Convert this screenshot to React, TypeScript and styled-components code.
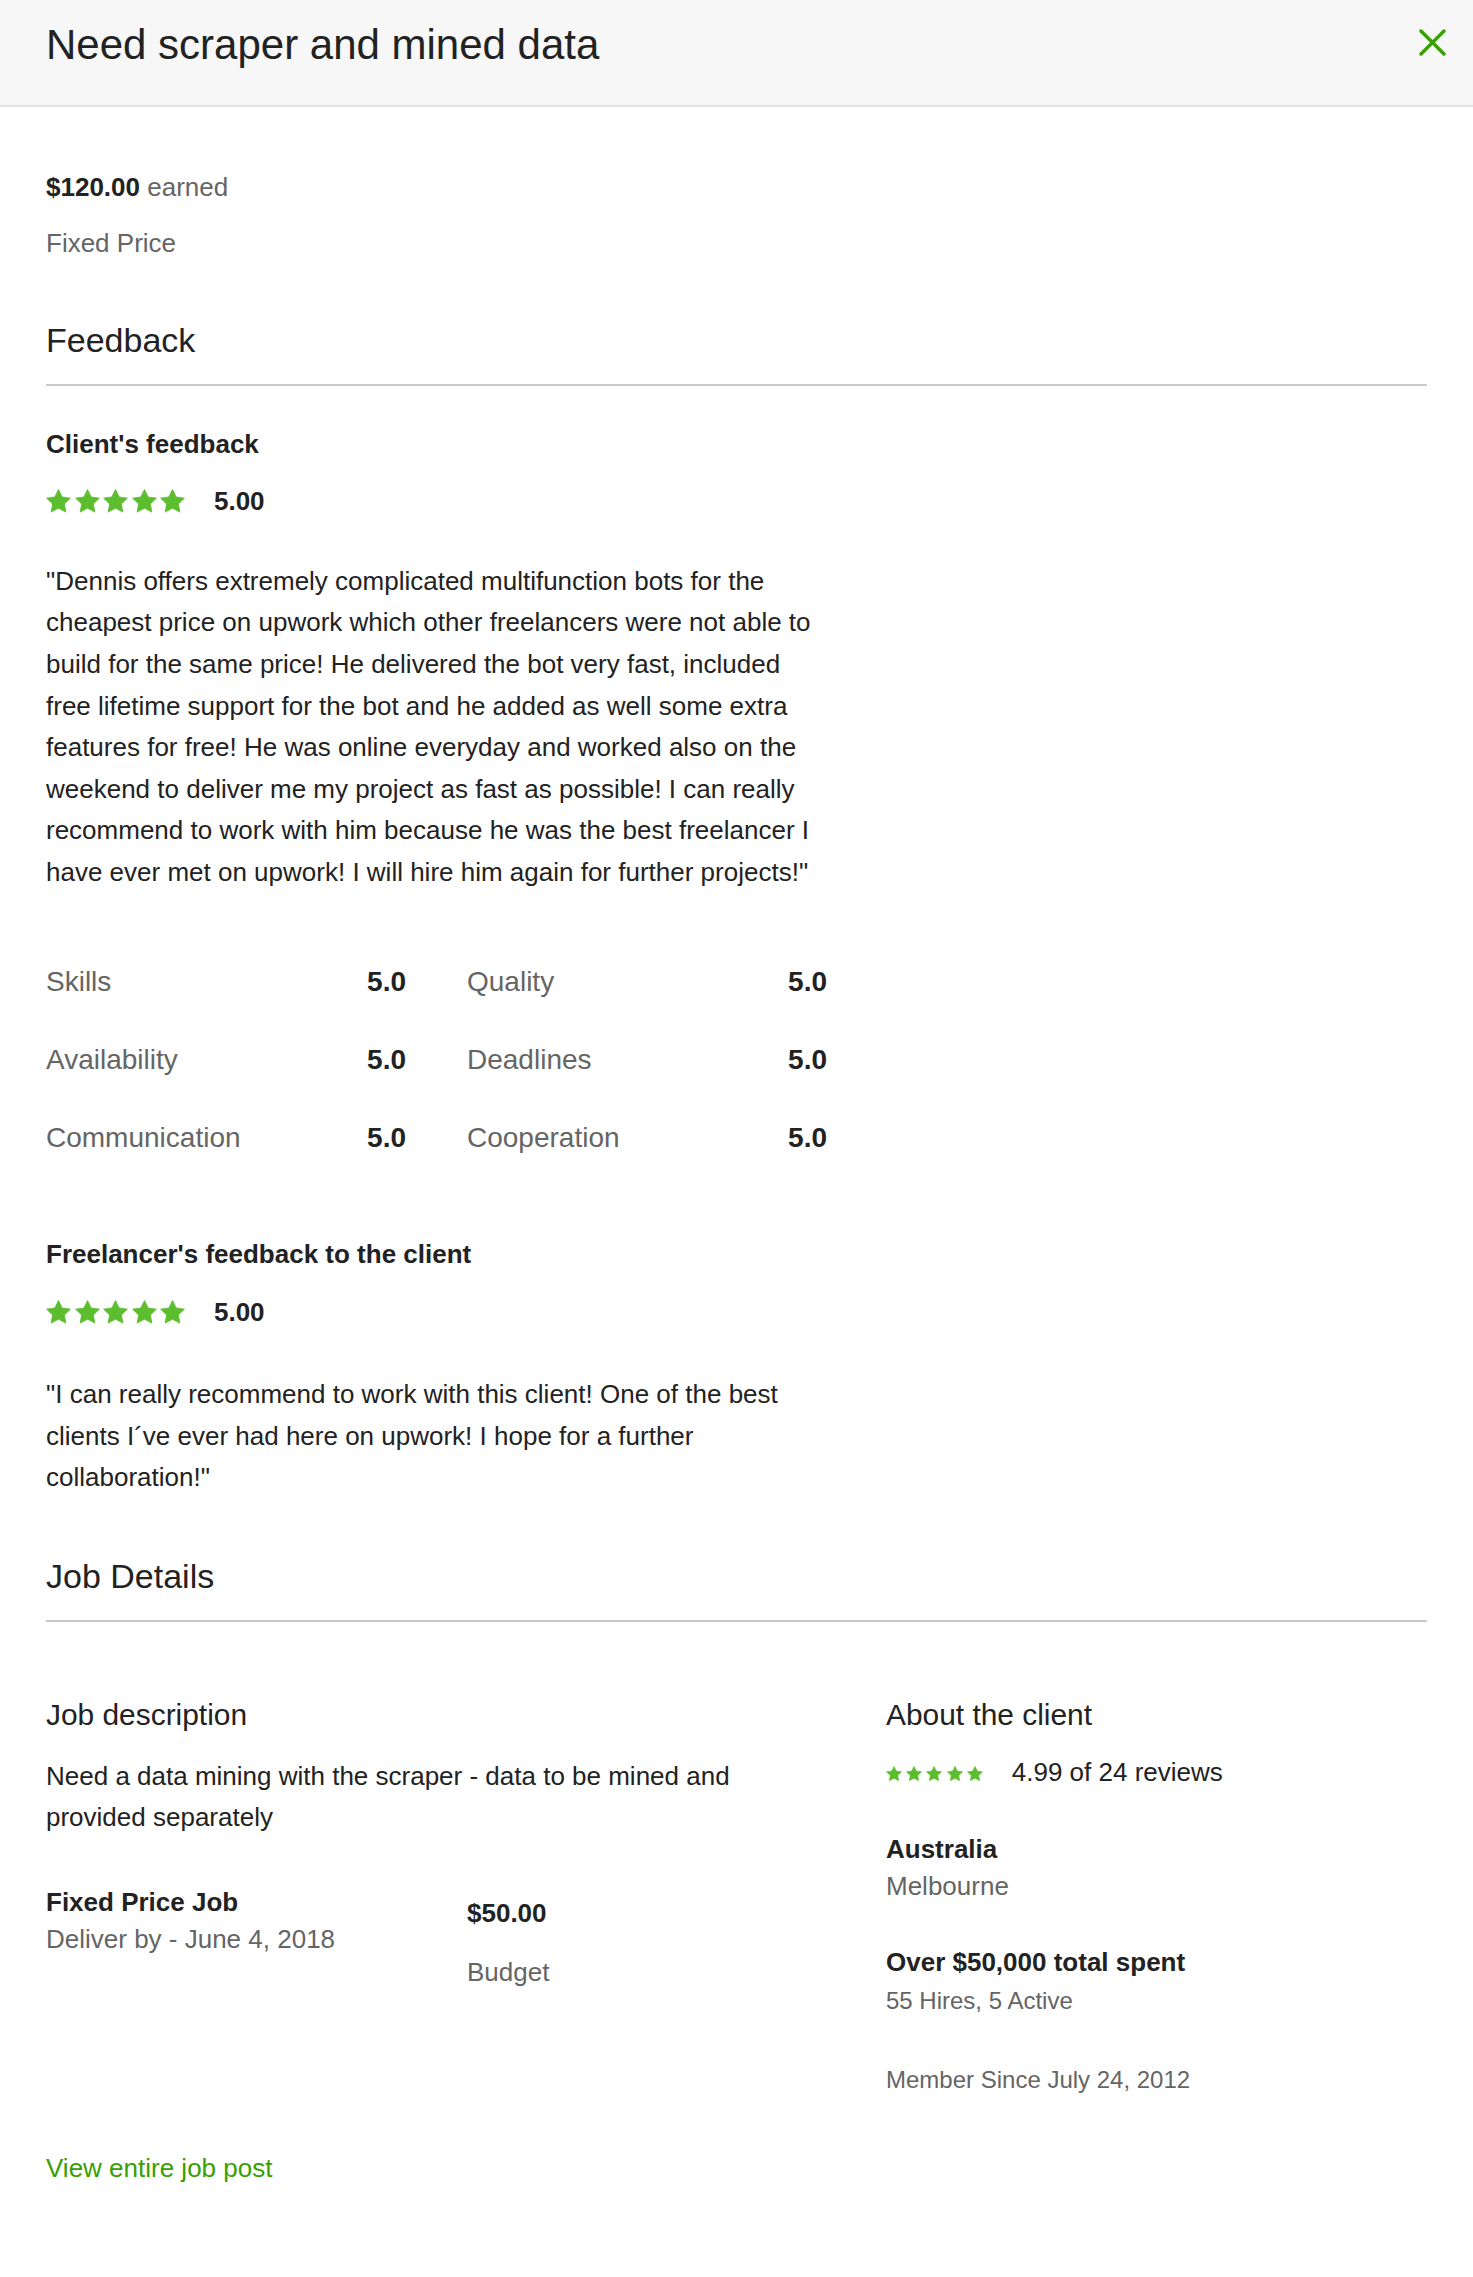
import React from "react";
import styled, { createGlobalStyle } from "styled-components";

const GlobalStyle = createGlobalStyle`
  html, body {
    margin: 0;
    padding: 0;
    background: #ffffff;
  }
  body {
    font-family: "Liberation Sans", Arial, Helvetica, sans-serif;
    color: #222222;
    -webkit-font-smoothing: antialiased;
  }
  * { box-sizing: border-box; }
`;

const Page = styled.div`
  width: 100%;
  min-height: 2277px;
  background: #ffffff;
`;

const Header = styled.header`
  display: flex;
  justify-content: space-between;
  align-items: flex-start;
  height: 107px;
  padding: 20px 27px 0 46px;
  background: #f7f7f7;
  border-bottom: 2px solid #e2e2e2;
`;

const Title = styled.h1`
  margin: 0;
  font-size: 42px;
  line-height: 50px;
  font-weight: 400;
  color: #222222;
`;

const CloseButton = styled.button`
  margin-top: 9px;
  width: 27px;
  height: 27px;
  padding: 0;
  border: 0;
  background: transparent;
  cursor: pointer;
  display: flex;
`;

const Body = styled.main`
  padding: 62px 46px 90px 46px;
`;

const Line = styled.div<{ $muted?: boolean; $mt?: number; $size?: number }>`
  margin: ${(p) => p.$mt ?? 0}px 0 0 0;
  font-size: ${(p) => p.$size ?? 26}px;
  line-height: 36.6px;
  color: ${(p) => (p.$muted ? "#656565" : "#222222")};
`;

const Strong = styled.strong`
  font-weight: 700;
  color: #222222;
`;

const Muted = styled.span`
  color: #656565;
`;

const SectionHeading = styled.h2<{ $mt: number }>`
  margin: ${(p) => p.$mt}px 0 0 0;
  padding-bottom: 24px;
  font-size: 34px;
  line-height: 40px;
  font-weight: 400;
  color: #222222;
  border-bottom: 2px solid #c9c9c9;
`;

const SubHeading = styled.h3<{ $mt: number }>`
  margin: ${(p) => p.$mt}px 0 0 0;
  font-size: 26px;
  line-height: 36.6px;
  font-weight: 700;
  color: #222222;
`;

const ScoreRow = styled.div<{ $mt: number; $gap: number }>`
  display: flex;
  align-items: center;
  gap: ${(p) => p.$gap}px;
  margin-top: ${(p) => p.$mt}px;
`;

const ScoreValue = styled.span<{ $bold?: boolean }>`
  font-size: 26px;
  line-height: 36.6px;
  font-weight: ${(p) => (p.$bold ? 700 : 400)};
  color: #222222;
`;

const StarStrip = styled.span<{ $gap: number; $offset?: number }>`
  display: inline-flex;
  gap: ${(p) => p.$gap}px;
  margin-top: ${(p) => p.$offset ?? 0}px;
`;

const Quote = styled.p<{ $mt: number }>`
  margin: ${(p) => p.$mt}px 0 0 0;
  max-width: 776px;
  font-size: 26px;
  line-height: 41.6px;
  color: #222222;
`;

const RatingsGrid = styled.div<{ $mt: number }>`
  display: grid;
  grid-template-columns: 360px 360px;
  column-gap: 61px;
  row-gap: 41.7px;
  margin-top: ${(p) => p.$mt}px;
`;

const RatingItem = styled.div`
  display: flex;
  justify-content: space-between;
  font-size: 28px;
  line-height: 36.6px;
`;

const RatingLabel = styled.span`
  color: #656565;
`;

const RatingValue = styled.span`
  font-weight: 700;
  color: #222222;
`;

const DetailsGrid = styled.div`
  display: grid;
  grid-template-columns: 781px 1fr;
  column-gap: 59px;
  margin-top: 74.5px;
`;

const Column = styled.div`
  display: flex;
  flex-direction: column;
`;

const ColumnTitle = styled.h4`
  margin: 0;
  font-size: 29.9px;
  line-height: 36px;
  font-weight: 400;
  color: #222222;
`;

const Budget = styled.div`
  display: grid;
  grid-template-columns: 360px 360px;
  column-gap: 61px;
  margin-top: 45px;
`;

const Link = styled.a`
  display: inline-block;
  margin-top: 51px;
  font-size: 26px;
  line-height: 36.6px;
  color: #37a000;
  text-decoration: none;
`;

const Star: React.FC<{ size: number }> = ({ size }) => (
  <svg width={size} height={size} viewBox="0 0 25 25" aria-hidden="true">
    <polygon
      points="12.5,0.5 16.14,7.98 24.39,9.14 18.4,14.92 19.85,23.11 12.5,19.2 5.15,23.11 6.6,14.92 0.61,9.14 8.86,7.98"
      fill="#5cbd2e"
      stroke="#5cbd2e"
      strokeWidth="0.8"
      strokeLinejoin="round"
    />
  </svg>
);

const Stars: React.FC<{ size: number; gap: number; offset?: number }> = ({ size, gap, offset }) => (
  <StarStrip $gap={gap} $offset={offset}>
    {[0, 1, 2, 3, 4].map((i) => (
      <Star key={i} size={size} />
    ))}
  </StarStrip>
);

const CloseIcon = () => (
  <svg width="27" height="27" viewBox="0 0 27 27" aria-hidden="true">
    <line x1="2" y1="2" x2="25" y2="25" stroke="#37a000" strokeWidth="3.4" strokeLinecap="round" />
    <line x1="25" y1="2" x2="2" y2="25" stroke="#37a000" strokeWidth="3.4" strokeLinecap="round" />
  </svg>
);

const ratings: [string, string][] = [
  ["Skills", "5.0"],
  ["Quality", "5.0"],
  ["Availability", "5.0"],
  ["Deadlines", "5.0"],
  ["Communication", "5.0"],
  ["Cooperation", "5.0"],
];

export default function App() {
  return (
    <Page>
      <GlobalStyle />
      <Header>
        <Title>Need scraper and mined data</Title>
        <CloseButton aria-label="Close">
          <CloseIcon />
        </CloseButton>
      </Header>
      <Body>
        <Line>
          <Strong>$120.00</Strong> <Muted>earned</Muted>
        </Line>
        <Line $muted $mt={19}>
          Fixed Price
        </Line>

        <SectionHeading $mt={58.5}>Feedback</SectionHeading>

        <SubHeading $mt={40}>Client's feedback</SubHeading>
        <ScoreRow $mt={21} $gap={28.6}>
          <Stars size={25} gap={3.6} />
          <ScoreValue $bold>5.00</ScoreValue>
        </ScoreRow>
        <Quote $mt={41}>
          "Dennis offers extremely complicated multifunction bots for the cheapest price on upwork which
          other freelancers were not able to build for the same price! He delivered the bot very fast,
          included free lifetime support for the bot and he added as well some extra features for free! He
          was online everyday and worked also on the weekend to deliver me my project as fast as possible! I
          can really recommend to work with him because he was the best freelancer I have ever met on
          upwork! I will hire him again for further projects!"
        </Quote>

        <RatingsGrid $mt={70}>
          {ratings.map(([label, value]) => (
            <RatingItem key={label}>
              <RatingLabel>{label}</RatingLabel>
              <RatingValue>{value}</RatingValue>
            </RatingItem>
          ))}
        </RatingsGrid>

        <SubHeading $mt={79}>Freelancer's feedback to the client</SubHeading>
        <ScoreRow $mt={22} $gap={28.6}>
          <Stars size={25} gap={3.6} />
          <ScoreValue $bold>5.00</ScoreValue>
        </ScoreRow>
        <Quote $mt={43}>
          "I can really recommend to work with this client! One of the best clients I´ve ever had here on
          upwork! I hope for a further collaboration!"
        </Quote>

        <SectionHeading $mt={57.5}>Job Details</SectionHeading>

        <DetailsGrid>
          <Column>
            <ColumnTitle>Job description</ColumnTitle>
            <Quote $mt={23}>
              Need a data mining with the scraper - data to be mined and provided separately
            </Quote>
            <Budget>
              <Column>
                <Line>
                  <Strong>Fixed Price Job</Strong>
                </Line>
                <Line $muted>Deliver by - June 4, 2018</Line>
              </Column>
              <Column>
                <Line $mt={11.5}>
                  <Strong>$50.00</Strong>
                </Line>
                <Line $muted $mt={22}>
                  Budget
                </Line>
              </Column>
            </Budget>
          </Column>
          <Column>
            <ColumnTitle>About the client</ColumnTitle>
            <ScoreRow $mt={21} $gap={29}>
              <Stars size={16} gap={4.2} offset={4} />
              <ScoreValue>4.99 of 24 reviews</ScoreValue>
            </ScoreRow>
            <Line $mt={41}>
              <Strong>Australia</Strong>
            </Line>
            <Line $muted>Melbourne</Line>
            <Line $mt={39.5}>
              <Strong>Over $50,000 total spent</Strong>
            </Line>
            <Line $muted $mt={2} $size={24}>
              55 Hires, 5 Active
            </Line>
            <Line $muted $mt={43} $size={24}>
              Member Since July 24, 2012
            </Line>
          </Column>
        </DetailsGrid>

        <Link href="#">View entire job post</Link>
      </Body>
    </Page>
  );
}
